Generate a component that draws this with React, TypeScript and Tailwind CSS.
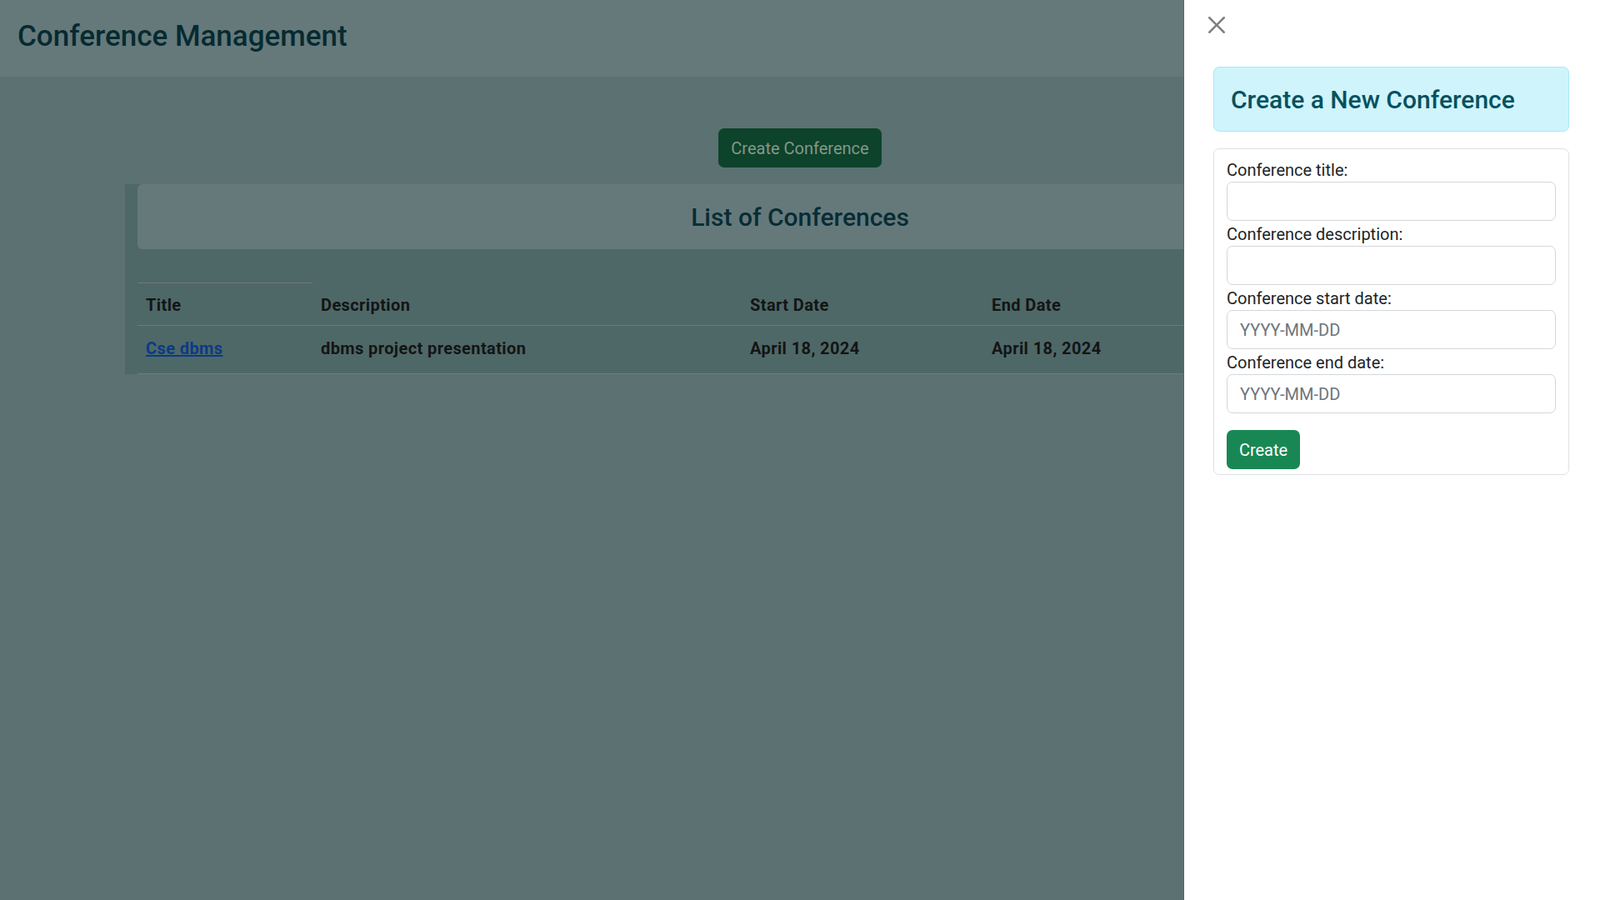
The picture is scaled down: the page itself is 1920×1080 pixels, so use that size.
import React from "react";

function CloseIcon() {
  return (
    <svg width="20" height="20" viewBox="0 0 16 16" className="block">
      <path
        fill="#000"
        fillOpacity="0.5"
        d="M.293.293a1 1 0 0 1 1.414 0L8 6.586 14.293.293a1 1 0 1 1 1.414 1.414L9.414 8l6.293 6.293a1 1 0 0 1-1.414 1.414L8 9.414l-6.293 6.293a1 1 0 0 1-1.414-1.414L6.586 8 .293 1.707a1 1 0 0 1 0-1.414z"
      />
    </svg>
  );
}

function Field({ label, placeholder }: { label: string; placeholder?: string }) {
  return (
    <div>
      <label className="block h-[30px] pt-[2px] text-[20px] leading-[28px] text-[#212529]">{label}</label>
      <input
        readOnly
        placeholder={placeholder}
        className="block h-[47px] w-full rounded-[7px] border border-[#d3d7dc] bg-white px-[15px] text-[20px] leading-[30px] text-[#212529] outline-none placeholder:text-[#6c757d]"
      />
    </div>
  );
}

export default function App() {
  return (
    <div className="relative min-h-screen w-full overflow-hidden bg-[#5c7172] font-['Roboto',sans-serif]">
      {/* Header */}
      <header className="h-[92px] bg-[#65797b] pl-[21px] pt-[23px]">
        <h1 className="text-[35px] font-medium leading-[42px] text-[#072a31]">Conference Management</h1>
      </header>

      {/* Create button */}
      <div className="flex justify-center pt-[62px]">
        <button className="h-[47px] w-[196px] rounded-[7px] bg-[#0c432a] text-[20px] leading-[30px] text-[#86968c]">
          Create Conference
        </button>
      </div>

      {/* List container */}
      <div className="mx-auto mt-[20px] w-[1620px] bg-[#4e6867] px-[15px]">
        <div className="h-[78px] rounded-[6px] bg-[#65797b] pt-[22px] text-center">
          <h2 className="text-[30px] font-medium leading-[36px] text-[#082c34]">List of Conferences</h2>
        </div>

        <div className="mt-[40px] text-[20px] font-bold leading-[30px] tracking-[0.4px] text-[#131515]">
          <div className="h-px w-[210px] bg-[#6d7878]" />
          <div className="grid h-[51px] grid-cols-[210px_515px_290px_290px_1fr] border-b border-[#6f7979] pt-[11px]">
            <div className="px-[10px]">Title</div>
            <div className="px-[10px]">Description</div>
            <div className="px-[10px]">Start Date</div>
            <div className="px-[10px]">End Date</div>
            <div className="px-[10px]" />
          </div>
          <div className="grid h-[58px] grid-cols-[210px_515px_290px_290px_1fr] border-b border-[#6b7e7e] pt-[12px]">
            <div className="px-[10px]">
              <a href="#" className="text-[#0b3a86] underline">Cse dbms</a>
            </div>
            <div className="px-[10px]">dbms project presentation</div>
            <div className="px-[10px]">April 18, 2024</div>
            <div className="px-[10px]">April 18, 2024</div>
            <div className="px-[10px]" />
          </div>
        </div>
      </div>

      {/* Offcanvas panel */}
      <aside className="fixed inset-y-0 right-0 w-[500px] border-l border-[#56696a] bg-white">
        <div className="pl-[29px] pt-[20px]">
          <button className="block h-[20px] w-[21px]" aria-label="Close">
            <CloseIcon />
          </button>
        </div>
        <div className="pl-[35px] pr-[37px] pt-[40px]">
          <div className="h-[78px] rounded-[7px] border border-[#a8e9f7] bg-[#cff4fc] pl-[20px] pt-[21px]">
            <h3 className="text-[30px] font-medium leading-[36px] text-[#055160]">Create a New Conference</h3>
          </div>

          <div className="mt-[20px] rounded-[7px] border border-[#dee2e6] px-[15px] pb-[6px] pt-[9px]">
            <Field label="Conference title:" />
            <Field label="Conference description:" />
            <Field label="Conference start date:" placeholder="YYYY-MM-DD" />
            <Field label="Conference end date:" placeholder="YYYY-MM-DD" />
            <button className="mt-[20px] h-[47px] w-[88px] rounded-[7px] bg-[#198754] text-[20px] leading-[30px] text-white">
              Create
            </button>
          </div>
        </div>
      </aside>
    </div>
  );
}
